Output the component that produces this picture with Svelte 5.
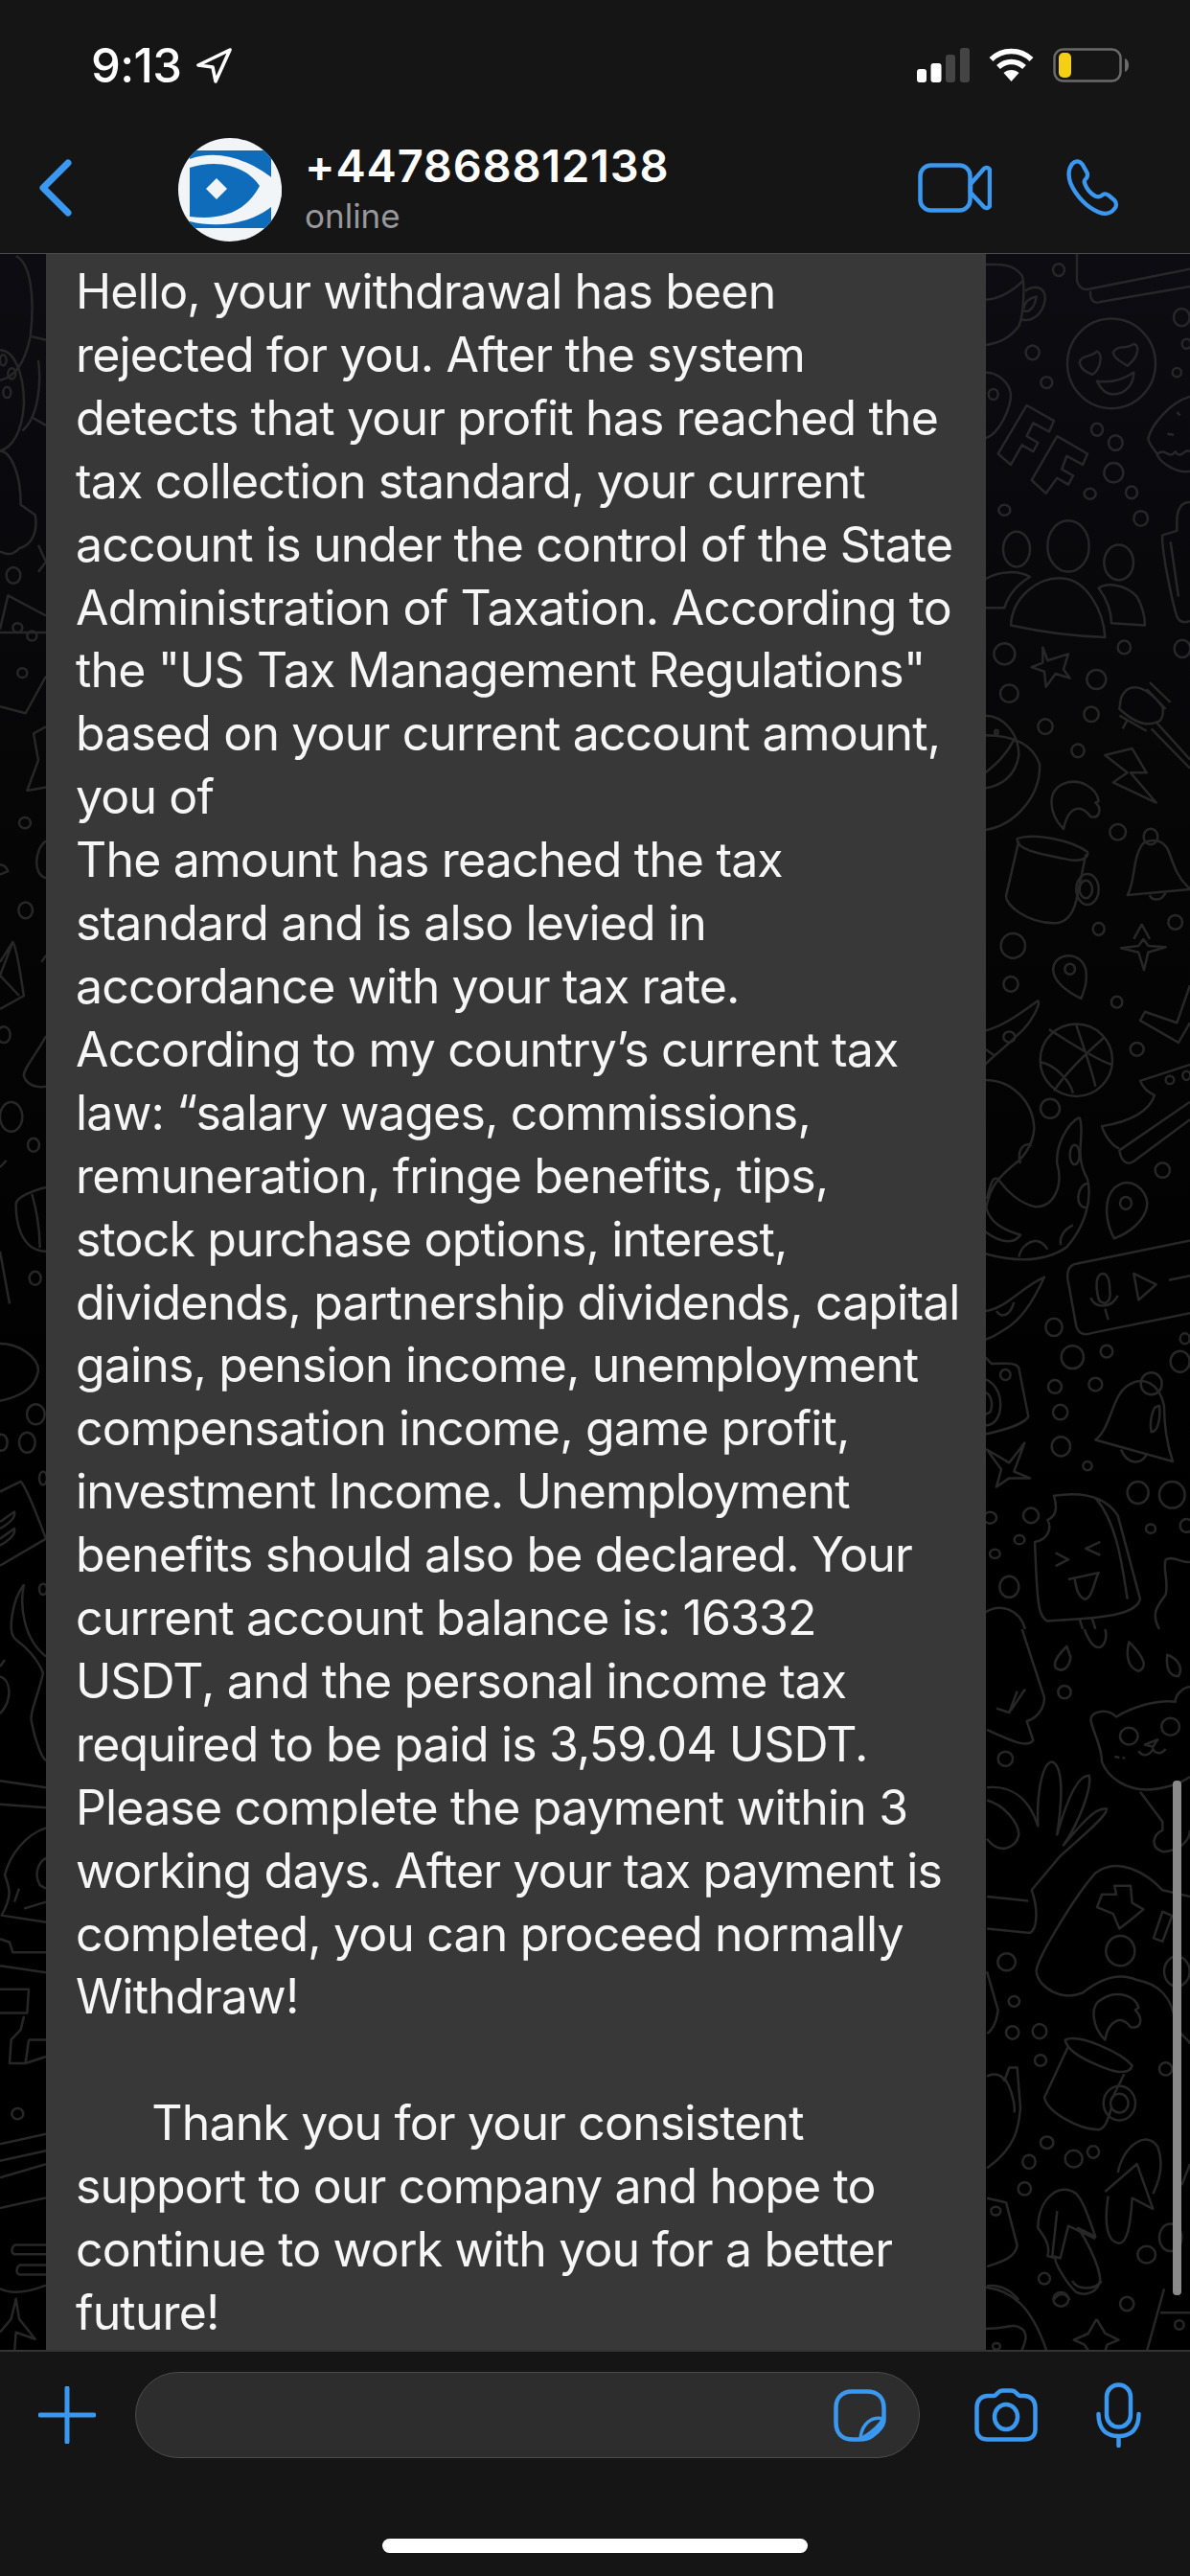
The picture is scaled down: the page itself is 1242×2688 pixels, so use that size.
<script>
  const lines = `Hello, your withdrawal has been
rejected for you. After the system
detects that your profit has reached the
tax collection standard, your current
account is under the control of the State
Administration of Taxation. According to
the "US Tax Management Regulations"
based on your current account amount,
you of
The amount has reached the tax
standard and is also levied in
accordance with your tax rate.
According to my country’s current tax
law: “salary wages, commissions,
remuneration, fringe benefits, tips,
stock purchase options, interest,
dividends, partnership dividends, capital
gains, pension income, unemployment
compensation income, game profit,
investment Income. Unemployment
benefits should also be declared. Your
current account balance is: 16332
USDT, and the personal income tax
required to be paid is 3,59.04 USDT.
Please complete the payment within 3
working days. After your tax payment is
completed, you can proceed normally
Withdraw!

      Thank you for your consistent
support to our company and hope to
continue to work with you for a better
future!`;

  // wallpaper doodles, traced per strip; each strip has its own scale
  const strips = [
    {
      t: "translate(1020,-5) scale(0.3333,0.4591)",
      d: "M25 35 C60 35 110 30 140 60 C150 80 145 150 130 175 C100 205 60 215 25 218 M25 115 C70 115 120 90 145 70 M150 95 C180 80 215 85 212 115 C205 150 170 165 140 160 M145 135 C150 115 170 110 185 108 C180 130 165 145 145 140 M312 10 V70 C315 85 330 95 355 90 L666 45 M355 95 C350 115 365 125 385 120 L666 85 M320 258 C325 240 360 245 375 232 C395 240 385 275 360 285 C345 280 325 275 320 258Z M425 235 C440 215 470 230 490 215 C510 220 505 245 470 265 C450 255 430 250 425 235Z M375 300 C420 305 460 295 490 280 C490 310 460 330 425 330 C400 330 385 315 375 300Z M25 280 C60 280 100 300 105 330 C105 360 70 420 25 430 M155 355 L240 390 L225 415 L175 395 L155 425 L190 440 L175 460 L140 445 L105 490 L65 465 Z M250 425 L345 465 L330 490 L280 470 L265 500 L300 515 L285 535 L250 520 L215 555 L170 525 Z M666 335 C600 350 545 400 535 430 C540 450 560 455 565 470 C580 490 630 510 666 505 M565 465 C590 450 600 480 620 460 C640 480 650 450 666 460 M595 420 L615 422 M625 370 L635 378 M666 575 C640 575 625 590 625 620 L625 640 L580 650 C575 680 610 800 625 835 C635 850 650 850 666 845 M605 665 L630 790 M105 855 C110 790 190 745 265 748 C340 750 395 820 400 882 C300 880 200 870 105 855Z M25 750 C70 730 130 730 165 745 C130 760 100 780 85 815 L25 815 M380 770 C410 755 470 765 500 790 C515 810 525 835 525 855 L420 850 C420 820 400 790 380 770Z M205 905 L220 935 L285 920 L270 955 L290 975 L245 965 L215 995 L210 960 L170 950 L205 940 Z M450 1020 C470 985 520 985 580 1040 C585 1060 575 1075 560 1075 C530 1085 490 1075 445 1045Z M540 985 L605 1030 M530 1000 L590 1045 M445 1060 L530 1095 M470 1070 L455 1090 M560 1075 L666 1160 M545 1090 L666 1180 M25 1060 C80 1060 130 1100 130 1150 C120 1200 70 1220 25 1225 M25 1105 C100 1105 170 1120 195 1170 C200 1240 120 1310 25 1320 M25 1190 C60 1170 90 1150 115 1115 M400 1150 L485 1135 L530 1190 L480 1190 L560 1258 L425 1212 L470 1190 Z M270 1318 C220 1280 220 1230 270 1215 C320 1200 375 1225 380 1255 L370 1258 C390 1270 385 1295 355 1290 C325 1260 285 1265 270 1318Z M470 1468 C495 1440 485 1380 520 1350 C545 1340 585 1340 600 1370 C620 1410 630 1430 660 1450 L666 1455 L470 1468Z M540 1468 C545 1480 575 1485 590 1462 M125 1340 C180 1325 300 1345 345 1370 C350 1385 320 1395 270 1385 C200 1375 120 1365 125 1340Z M130 1345 L90 1470 C90 1490 150 1530 240 1532 C280 1532 300 1510 310 1480 L340 1375 M490 1568 L515 1535 L540 1568",
      o: [[255,47,18,14],[640,155,25,20],[655,215,14,11],[625,280,14,10],[420,260,138,102],[173,235,21,16],[217,303,18,13],[50,330,15,12],[375,410,18,14],[433,440,22,17],[427,508,30,22],[353,556,18,12],[483,553,18,14],[512,612,22,17],[85,593,18,12],[123,682,42,40],[285,675,65,58],[443,712,46,40],[85,920,33,24],[460,905,20,15],[642,908,25,20],[100,1010,28,20],[373,978,30,22],[357,1057,23,17],[213,1085,23,17],[315,1140,20,15],[60,1098,5,5],[440,1325,25,18],[543,1335,22,18],[345,1455,35,35],[340,1455,20,20],[380,1545,18,14],[620,1530,22,16]]
    },
    {
      t: "translate(1020,715) scale(0.3333,0.4591)",
      d: "M325 135 C270 115 235 90 238 65 C245 30 325 25 340 70 C345 100 335 115 325 135Z M450 20 L505 15 L520 0 L535 15 L590 18 L535 30 L522 70 L505 30Z M25 208 C90 195 140 165 190 140 C200 145 170 190 130 215 C90 245 50 265 25 285 M25 250 L55 265 M200 280 C240 285 290 320 300 350 M310 195 C330 240 360 300 370 335 M225 205 C280 230 360 270 420 285 M240 345 C280 300 340 260 395 225 M666 105 L625 190 L525 165 L510 185 L630 235 L666 190 M25 320 C110 320 175 370 178 430 C175 470 140 500 110 515 C70 540 40 560 28 610 C40 650 100 665 135 672 C120 690 80 695 25 665 M135 510 C120 470 160 460 170 470 M320 405 C340 440 300 490 345 545 C360 590 340 650 280 700 C200 740 100 730 25 715 M320 405 C280 420 245 470 250 510 C270 560 240 610 180 608 C130 600 90 570 70 550 C50 530 40 560 30 590 M345 555 C310 560 305 610 340 610 M300 650 C270 660 255 680 262 695 M130 722 C140 690 190 670 220 705 M666 285 L510 322 C520 340 540 350 555 355 C540 390 480 415 390 425 C400 450 430 475 445 475 M666 370 L445 480 C450 505 470 515 490 505 L666 410 M428 680 C400 640 395 590 430 565 C480 535 530 570 532 600 C530 640 470 670 428 680Z M666 685 L310 738 C285 740 278 760 285 780 L310 880 C318 900 340 900 360 895 L666 850 M375 800 C370 770 380 760 395 760 C410 762 415 775 415 800 C420 825 400 830 390 825 C380 825 378 815 375 800Z M355 815 C370 840 420 840 440 810 M400 840 L410 865 M490 760 L560 785 L505 820Z M600 775 L666 765 M25 845 C90 840 140 790 210 768 C190 800 150 860 90 885 C70 895 50 905 25 910 M60 845 C75 860 100 860 115 825 M25 950 L45 965 C80 965 120 960 130 975 L160 1085 C150 1100 90 1115 25 1125 M25 1000 C60 1010 80 1040 70 1075 C60 1100 40 1105 25 1105 M25 1030 C45 1035 50 1060 40 1075 L25 1080 M370 1138 C420 1110 420 1040 470 1015 C520 990 570 1010 585 1060 C585 1110 595 1150 612 1187 L370 1138Z M555 1065 C545 1080 540 1100 545 1120 C565 1120 575 1090 570 1060Z M450 1160 C470 1195 510 1195 530 1172 M30 1160 L100 1190 L148 1145 L115 1210 L165 1225 L100 1225 L60 1245 L75 1205 Z M240 1265 C330 1255 400 1265 440 1310 L510 1500 C500 1530 420 1540 320 1545 L220 1550 C190 1540 190 1500 185 1450 L180 1370 C220 1365 235 1340 220 1320 C250 1310 250 1290 240 1265Z M370 1270 C430 1320 450 1400 470 1500 M245 1395 L285 1410 L245 1425 M385 1370 L340 1385 L385 1400 M285 1455 L380 1440 C365 1460 360 1500 335 1500 C310 1490 310 1470 305 1455 M320 1545 L330 1568 M360 1545 L370 1568 M666 1415 C640 1420 620 1400 590 1410 C580 1430 600 1460 590 1490 C570 1510 540 1530 570 1568 M25 1530 C70 1510 130 1520 150 1568",
      o: [[112,15,38,28],[290,68,16,12],[437,143,17,13],[105,102,23,17],[310,275,113,82],[100,222,18,12],[500,250,21,15],[228,385,30,22],[305,490,15,22],[603,320,13,9],[655,310,12,10],[580,525,23,17],[465,600,18,14],[240,882,26,20],[298,950,35,26],[405,937,19,14],[243,1017,21,15],[370,1012,21,15],[260,1075,23,17],[262,1153,29,22],[345,1197,14,10],[503,1258,33,25],[610,1263,40,30],[543,1340,15,10],[655,1333,20,15],[650,908,15,12],[635,960,30,24],[88,990,16,12],[545,1010,33,25],[168,1310,24,17],[40,1315,20,13],[132,1365,16,10],[55,1397,16,10],[100,1472,30,24]]
    },
    {
      t: "translate(1000,1435) scale(0.3333,0.4464)",
      d: "M340 40 C320 55 295 75 305 90 C330 105 350 85 352 65Z M535 30 C525 60 530 90 565 98 C590 90 590 70 535 30Z M655 60 C650 90 660 110 690 110 C705 90 690 70 655 60Z M395 0 C410 30 430 50 450 40 C465 30 465 10 460 0 M200 0 L270 160 C270 190 240 210 215 215 L235 260 C220 275 190 270 90 235 M120 185 L160 195 L185 145 M165 190 L210 140 M415 210 C420 190 470 185 495 205 C560 175 640 165 680 170 C680 150 710 135 726 135 M415 210 C420 240 450 270 450 310 C470 350 530 375 590 375 C640 375 700 360 726 345 M585 270 L625 258 L610 275Z M565 285 C580 300 600 295 610 280 C620 295 640 290 650 280 M490 298 L505 300 M515 300 L522 302 M570 380 L640 450 L640 470 C610 480 600 510 640 520 C680 520 726 500 726 470 M90 370 C160 365 220 390 250 460 C245 380 265 310 295 310 C325 320 330 380 310 480 C340 400 375 340 410 342 C420 370 380 450 330 505 C380 460 430 415 465 420 C470 435 380 490 320 530 L230 610 C250 650 250 700 225 710 L90 700 M90 625 L220 635 M90 400 C140 410 190 450 190 480 C185 510 130 530 90 490 M245 800 C245 770 370 620 430 570 C500 530 590 570 640 610 L726 625 M245 800 C250 840 330 870 390 850 C440 820 500 800 560 820 C630 830 670 860 680 920 C690 950 726 960 726 970 M490 600 L540 600 L545 640 L580 655 L540 680 L505 700 L485 665 L435 650 L450 620 L495 620Z M640 660 L670 670 L640 730 L612 722Z M460 960 C420 930 410 880 450 865 C500 840 560 860 565 885 L555 890 C580 910 575 935 540 930 C510 900 470 915 460 960Z M335 960 C380 945 510 990 545 1020 C540 1040 500 1040 440 1020 C390 1005 340 985 335 960Z M345 975 L270 1095 C280 1130 380 1170 440 1170 C465 1165 470 1140 480 1120 M520 1040 L480 1100 M90 800 L125 890 C120 920 105 940 90 945 M90 1045 C120 1035 140 1045 145 1055 L160 1025 L185 1025 L195 1120 C190 1160 185 1210 90 1260 M145 1050 C170 1075 180 1120 175 1130 M250 1400 C250 1330 320 1290 370 1320 C395 1340 410 1380 430 1420 L375 1400 C395 1420 440 1480 445 1520 C440 1550 400 1560 370 1550 C340 1530 300 1480 305 1470 L280 1465 C290 1440 270 1420 250 1400Z M310 1360 L295 1465 L320 1470 L345 1395 L430 1425 M460 1315 L560 1250 L610 1355 L545 1330 C540 1390 530 1440 500 1435 C470 1430 455 1395 470 1325 M500 1270 C520 1205 590 1170 625 1210 C645 1250 630 1290 610 1320 M90 1330 L150 1340 L185 1440 C180 1470 130 1480 90 1490 M90 1535 C140 1530 170 1550 190 1568 M300 1568 C315 1550 335 1550 350 1568 M700 1300 L726 1250",
      o: [[333,147,20,15],[148,303,23,17],[535,250,28,20],[665,228,28,20],[152,778,28,20],[175,870,17,12],[170,943,20,15],[255,940,22,17],[258,1008,18,13],[650,1028,20,15],[508,752,45,35],[685,800,40,35],[505,1108,50,40],[505,1108,28,22],[278,1200,20,14],[222,1245,20,16],[362,1238,27,20],[423,1222,18,14],[208,1308,20,15],[590,1462,28,20],[270,1518,18,13],[665,1422,35,32],[118,1360,15,10]]
    },
    {
      t: "translate(621,2115) scale(0.396,0.3333)",
      d: "M1030 20 C1100 30 1150 80 1190 218 M1030 150 C1090 150 1100 130 1125 150 C1145 170 1130 200 1125 218 M1322 120 L1345 165 L1380 185 L1350 200 L1345 218 M1322 120 L1300 165 L1262 185 L1290 200 L1300 218 M1500 25 L1455 218 M1490 100 L1568 100 M1258 0 C1270 30 1320 30 1335 0",
      o: [[1228,58,20,22],[1402,72,18,22],[1540,138,12,14],[1058,205,10,10]]
    },
    {
      t: "translate(0,-5) scale(0.3333,0.7018)",
      d: "M50 10 C95 20 110 70 95 130 C80 165 50 190 0 195 M0 150 C40 150 75 180 75 230 C70 270 40 295 0 300 M100 130 L144 135 M120 165 C130 200 120 250 70 270 M100 250 L144 262 M0 300 C30 300 65 330 65 380 L110 395 C120 420 100 440 60 445 C30 460 10 450 0 450 M120 440 L144 465 L120 480 M0 565 L25 515 L144 545 M0 570 H144 M0 680 L80 690 L144 635 M144 710 L105 720 L120 760 L85 805 L144 800 M144 880 C110 890 100 930 144 935 M0 915 C15 915 20 920 25 925 L0 930 M0 1080 L40 1030 C55 1040 70 1100 75 1110 L0 1130 M40 1030 L0 1060 M0 1080 L60 1110 M144 1050 L130 1060 M144 1170 C110 1200 70 1220 75 1230 C90 1250 144 1245 144 1245 M0 1365 L20 1355 M144 1395 C100 1400 50 1410 50 1420 C50 1460 80 1490 144 1490 M100 1405 C115 1430 125 1460 125 1485 M0 1490 L30 1568",
      o: [[10,165,10,8],[37,185,12,8],[22,213,12,8],[42,485,22,12],[55,563,15,7],[100,575,15,7],[70,630,15,7],[78,853,18,8],[80,983,22,12],[12,1168,20,12],[35,1290,35,22],[105,1332,18,10],[110,1530,18,10]]
    },
    {
      t: "translate(0,1095) scale(0.3333,0.7018)",
      d: "M0 60 C60 60 120 80 120 100 C110 130 50 140 0 145 M0 280 L65 265 C85 275 120 320 144 350 L0 390 M0 325 L45 310 C50 320 20 330 0 335 M0 350 L45 335 C50 345 20 355 0 360 M75 418 C40 440 20 490 50 500 C80 510 120 530 135 550 C115 590 90 610 100 625 C110 650 130 675 144 680 M75 418 C60 450 75 500 144 525 M0 555 C35 560 40 590 0 610 M0 540 L15 530 M0 710 L144 720 M0 745 L144 750 M144 780 C80 790 30 820 15 850 C30 870 40 880 5 910 L144 920 M144 825 C120 830 105 850 125 865 L144 870 M60 870 L45 890 M75 900 L144 890 M0 945 L30 950 L40 965 L144 965 M0 985 L144 995 M0 1020 H90 L85 1055 H0 M90 1095 H144 M90 1095 L80 1130 H30 L35 1095 L65 1080 L75 1060 M80 1130 L144 1120 M0 1250 L144 1235 M0 1275 L144 1260 M0 1300 L144 1280 M0 1345 L144 1330 M45 1400 H144 M45 1400 C35 1405 35 1412 45 1414 H144 M60 1430 H144 M60 1430 C50 1435 50 1442 60 1444 H144 M0 1465 C40 1475 90 1470 144 1460 M0 1530 L35 1510 L50 1480 L60 1510 L110 1540 L50 1530 L45 1560",
      o: [[112,165,28,15],[85,207,25,15],[5,207,18,12],[135,260,12,10],[135,425,12,8],[55,1205,18,8]]
    }
  ];
</script>

<div class="screen">
  <header>
    <div class="status">
      <div class="time">
        9:13
        <svg width="37" height="37" viewBox="0 0 37 37"><path d="M35 2 L2 18 L17 20 L20 35 Z" fill="none" stroke="#fff" stroke-width="3.6" stroke-linejoin="round"/></svg>
      </div>
      <div class="sys">
        <svg width="55" height="36" viewBox="0 0 55 36">
          <rect x="0" y="22" width="10" height="14" rx="3" fill="#fff"/>
          <rect x="14.5" y="16" width="11" height="20" rx="3" fill="#fff"/>
          <rect x="30" y="7" width="10" height="29" rx="3" fill="#444"/>
          <rect x="45" y="0" width="10" height="36" rx="3" fill="#444"/>
        </svg>
        <svg width="47" height="36" viewBox="0 0 47 36" fill="none" stroke="#fff" stroke-width="5.5">
          <path d="M2.5 12 C14 0.5 33 0.5 44.5 12"/>
          <path d="M10 20 C18 12.5 29 12.5 37 20"/>
          <path d="M23.5 35 L15.5 26 C20 22 27 22 31.5 26 Z" fill="#fff" stroke="none"/>
        </svg>
        <svg width="79" height="36" viewBox="0 0 79 36">
          <rect x="1.5" y="1.5" width="69" height="33" rx="9" fill="none" stroke="#6a6a6a" stroke-width="2.5"/>
          <rect x="6" y="5" width="13" height="26" rx="5" fill="#f5cf13"/>
          <path d="M75 11 C78 12 79 15 79 18 C79 21 78 24 75 25 Z" fill="#6a6a6a"/>
        </svg>
      </div>
    </div>
    <nav>
      <svg class="back" width="36" height="60" viewBox="0 0 36 60"><path d="M31 4 L5 30 L31 56" fill="none" stroke="#3a98f0" stroke-width="7" stroke-linecap="round" stroke-linejoin="round"/></svg>
      <svg class="avatar" width="108" height="108" viewBox="0 0 108 108">
        <defs><clipPath id="ac"><circle cx="54" cy="54" r="54"/></clipPath></defs>
        <g clip-path="url(#ac)">
          <rect width="108" height="108" fill="#f2f5f7"/>
          <rect x="12" y="13" width="85" height="81" fill="#0f6cba"/>
          <path d="M12 22 C45 10 80 25 108 50 L108 62 C80 92 40 94 12 87 L12 82 C45 86 70 78 85 50 C70 28 40 22 12 31Z" fill="#f2f5f7"/>
          <path d="M29 53 L40 42 L51 53 L40 64 Z" fill="#f2f5f7"/>
        </g>
      </svg>
      <div class="who">
        <div class="num">+447868812138</div>
        <div class="online">online</div>
      </div>
      <div class="actions">
        <svg width="77" height="52" viewBox="0 0 77 52" fill="none" stroke="#3a98f0" stroke-width="4.5" stroke-linejoin="round">
          <rect x="2.5" y="2.5" width="52" height="47" rx="11"/>
          <path d="M55 22 L69 6 C71 4 75 5 75 8 V44 C75 47 71 48 69 46 L55 31 Z"/>
        </svg>
        <svg width="61" height="60" viewBox="0 0 56 62" fill="none" stroke="#3a98f0" stroke-width="4.5" stroke-linejoin="round">
          <path d="M6 5 C10 1 14 2 17 6 L22 15 C23 18 22 20 20 22 C18 24 19 26 21 30 C24 35 27 38 31 40 C34 41 36 41 38 39 C40 37 42 37 45 39 L51 44 C54 47 54 51 51 54 C47 59 41 60 34 57 C22 52 10 40 4 26 C1 17 2 10 6 5 Z"/>
        </svg>
      </div>
    </nav>
  </header>

  <main>
    <svg class="doodles" width="1242" height="2187" viewBox="0 0 1242 2187">
      {#each strips as s}
        <g transform={s.t}>
          <path d={s.d}/>
          {#each s.o as [cx, cy, rx, ry]}
            <ellipse {cx} {cy} {rx} {ry}/>
          {/each}
        </g>
      {/each}
    </svg>
    <div class="bubble">{lines}</div>
    <div class="scroll"></div>
  </main>

  <footer>
    <div class="composer">
      <svg class="plus" width="60" height="60" viewBox="0 0 60 60"><path d="M30 2 V58 M2 30 H58" stroke="#3a98f0" stroke-width="5" stroke-linecap="round"/></svg>
      <div class="field">
        <svg width="55" height="55" viewBox="0 0 55 55" fill="none" stroke="#3a98f0" stroke-width="4.5">
          <path d="M19 2.5 H35 C46 2.5 52.5 9 52.5 20 V32 C52.5 37 50 40 46 44 L40 49 C36 52 33 52.5 27 52.5 H20 C9 52.5 2.5 46 2.5 35 V19 C2.5 9 9 2.5 19 2.5 Z"/>
          <path d="M52 31 C40 28 29 36 28 52 M52 31 C49 36 41 45 28 52" stroke-width="3.5"/>
        </svg>
      </div>
      <svg class="cam" width="66" height="56" viewBox="0 0 66 56" fill="none" stroke="#3a98f0" stroke-width="4.5" stroke-linejoin="round">
        <path d="M14 8 H20 C22 8 23 6 25 4.5 C26 3 28 2.5 30 2.5 H38 C40 2.5 42 3 43 4.5 C45 6 46 8 48 8 H52 C59 8 63.5 13 63.5 20 V43 C63.5 50 59 53.5 52 53.5 H14 C7 53.5 2.5 50 2.5 43 V20 C2.5 13 7 8 14 8 Z"/>
        <ellipse cx="33" cy="30" rx="12" ry="13"/>
      </svg>
      <svg class="mic" width="47" height="68" viewBox="0 0 47 68" fill="none" stroke="#3a98f0" stroke-width="4.5" stroke-linecap="round">
        <rect x="11" y="2.5" width="25" height="44" rx="12.5"/>
        <path d="M2.5 33 C2.5 48 10 56 23.5 56 C37 56 44.5 48 44.5 33 M23.5 56 V66"/>
      </svg>
    </div>
    <div class="home"></div>
  </footer>
</div>

<style>
  :global(body) {
    margin: 0;
    background: #151515;
  }

  .screen {
    width: 1242px;
    height: 2688px;
    display: flex;
    flex-direction: column;
    overflow: hidden;
    background: #151515;
    font-family: Inter, "Liberation Sans", sans-serif;
    color: #fff;
  }

  header {
    height: 265px;
    box-sizing: border-box;
    flex: none;
    border-bottom: 1px solid #4a4a4a;
  }

  .status {
    height: 138px;
    box-sizing: border-box;
    padding: 50px 64px 0 95px;
    display: flex;
    justify-content: space-between;
    align-items: flex-start;
  }

  .time {
    display: flex;
    align-items: center;
    gap: 16px;
    font-size: 49px;
    font-weight: 500;
    line-height: 37px;
    height: 37px;
    letter-spacing: -0.6px;
  }

  .sys {
    display: flex;
    align-items: flex-start;
    gap: 20px;
  }

  nav {
    display: flex;
    align-items: center;
    height: 108px;
    margin-top: 6px;
    padding-left: 40px;
  }

  .back {
    margin-top: -4px;
    flex: none;
  }

  .avatar {
    margin-left: 110px;
    flex: none;
  }

  .who {
    margin-left: 24px;
    margin-top: -6px;
  }

  .num {
    font-size: 47px;
    font-weight: 600;
    line-height: 56px;
    letter-spacing: 0.8px;
  }

  .online {
    font-size: 35px;
    line-height: 42px;
    margin-top: 3px;
    color: #98989d;
  }

  .actions {
    margin-left: auto;
    margin-right: 71px;
    margin-top: -4px;
    display: flex;
    align-items: center;
    gap: 75px;
  }

  main {
    flex: none;
    height: 2187px;
    position: relative;
    background: linear-gradient(#0c0c12, #060607 25%, #000 60%);
    overflow: hidden;
    border-bottom: 2px solid #333;
  }

  .doodles {
    position: absolute;
    left: 0;
    top: 0;
  }

  .doodles path,
  .doodles ellipse {
    fill: none;
    stroke: #272728;
    stroke-width: 2.5px;
    stroke-linejoin: round;
    vector-effect: non-scaling-stroke;
  }

  .bubble {
    position: relative;
    box-sizing: border-box;
    margin-left: 48px;
    width: 981px;
    height: 100%;
    background: #383838;
    padding: 7px 0 0 31px;
    white-space: pre;
    font-size: 50px;
    line-height: 65.9px;
    letter-spacing: -0.85px;
    color: #f6f6f6;
  }

  .scroll {
    position: absolute;
    right: 9px;
    top: 1593px;
    bottom: 57px;
    width: 9px;
    border-radius: 4px;
    background: #8a8a8a;
  }

  footer {
    flex: 1;
    display: flex;
    flex-direction: column;
  }

  .composer {
    display: flex;
    align-items: center;
    height: 90px;
    margin-top: 21px;
    padding-left: 40px;
  }

  .plus {
    flex: none;
  }

  .field {
    box-sizing: border-box;
    width: 819px;
    height: 90px;
    margin-left: 41px;
    border: 1.5px solid #4c4c4c;
    border-radius: 45px;
    background: #2d2d2d;
    display: flex;
    align-items: center;
    justify-content: flex-end;
    padding-right: 34px;
  }

  .cam {
    margin-left: 57px;
  }

  .mic {
    margin-left: 61px;
  }

  .home {
    width: 444px;
    height: 15px;
    border-radius: 8px;
    background: #fff;
    margin: 84px auto 0;
  }
</style>
